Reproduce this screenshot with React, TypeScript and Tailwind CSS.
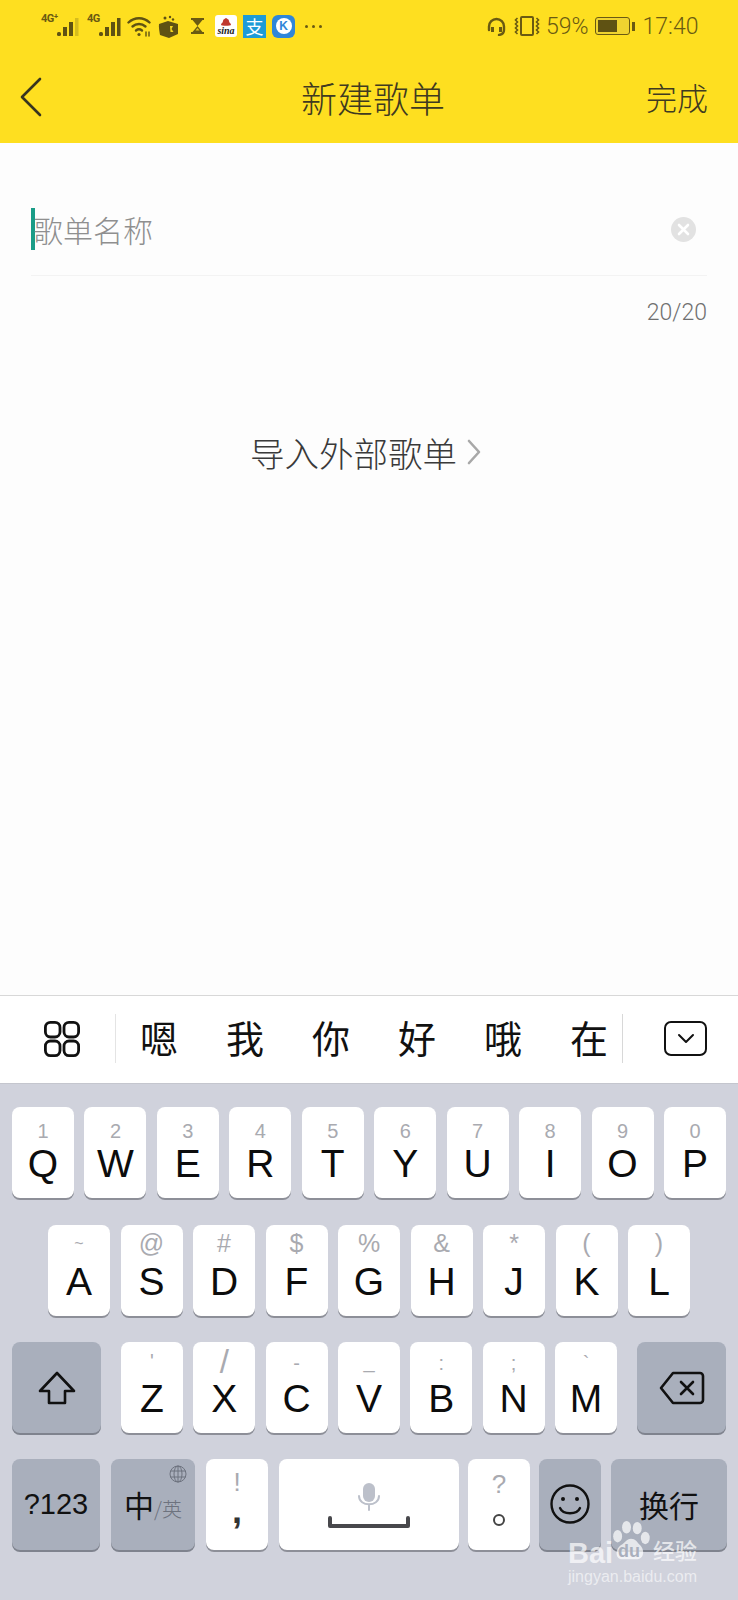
const CJK = "font-['Noto_Sans_CJK_SC','Noto_Sans',sans-serif]";

const ROW_ONE = [
  ['1', 'Q'], ['2', 'W'], ['3', 'E'], ['4', 'R'], ['5', 'T'],
  ['6', 'Y'], ['7', 'U'], ['8', 'I'], ['9', 'O'], ['0', 'P'],
];
const ROW_TWO = [
  ['~', 'A', '-mt-[5px] mb-[5px] text-[16px]'],
  ['@', 'S', '-mt-[5px] mb-[5px] text-[25px]'],
  ['#', 'D', '-mt-[5px] mb-[5px] text-[25px]'],
  ['$', 'F', '-mt-[5px] mb-[5px] text-[25px]'],
  ['%', 'G', '-mt-[5px] mb-[5px] text-[25px]'],
  ['&', 'H', '-mt-[5px] mb-[5px] text-[25px]'],
  ['*', 'J', '-mt-[5px] mb-[5px] text-[25px]'],
  ['(', 'K', '-mt-[5px] mb-[5px] text-[25px]'],
  [')', 'L', '-mt-[5px] mb-[5px] text-[25px]'],
];
const ROW_THREE = [
  ["'", 'Z', '-mt-[5px] mb-[5px] text-[20px]'],
  ['/', 'X', '-mt-[4px] mb-[4px] text-[33px]'],
  ['-', 'C', '-mt-[3px] mb-[3px] text-[20px]'],
  ['_', 'V', '-mt-[5px] mb-[5px] text-[20px]'],
  [':', 'B', '-mt-[3px] mb-[3px] text-[20px]'],
  [';', 'N', '-mt-[3px] mb-[3px] text-[20px]'],
  ['`', 'M', '-mt-[3px] mb-[3px] text-[20px]'],
];
const CANDIDATES = ['嗯', '我', '你', '好', '哦', '在'];

function SignalBars({ faded = false }: { faded?: boolean }) {
  return (
    <svg width="22" height="18" viewBox="0 0 22 18" fill="#5f5213">
      <rect x="0" y="14" width="4" height="4" rx="1.500" />
      <rect x="6" y="9" width="4" height="9" />
      <rect x="12" y="4" width="4" height="14" />
      <rect x="18" y="0" width="3.500" height="18" opacity={faded ? 0.25 : 1} />
    </svg>
  );
}

function WifiIcon() {
  return (
    <svg width="24" height="21" viewBox="0 0 24 21" fill="none" stroke="#5f5213" strokeWidth="2.400" strokeLinecap="round">
      <path d="M1.500 6.500C7.500 .8 16.500 .8 22.500 6.500" />
      <path d="M5.500 10.500C9.200 7.200 14.800 7.200 18.500 10.500" />
      <path d="M9 14.500c1.800-1.400 4.200-1.400 6 0" />
      <circle cx="12" cy="18.500" r="1.600" fill="#5f5213" stroke="none" />
      <path d="M19 16v4M22 16v4" strokeWidth="1.400" />
    </svg>
  );
}

function GiftIcon() {
  return (
    <svg width="21" height="23" viewBox="0 0 21 23" fill="#5f5213">
      <path d="M1 9l9-3 10 3v10l-9 4-9-3C1.500 17 .5 12 1 9z" />
      <path d="M12 11l3 0-1.500 3 2 3-3 0z" fill="#f5d820" />
      <circle cx="7" cy="3" r="1.500" />
      <circle cx="12" cy="2" r="1.200" />
      <circle cx="15" cy="4.500" r="1.200" />
    </svg>
  );
}

function HourglassIcon() {
  return (
    <svg width="13" height="16" viewBox="0 0 13 16" fill="#6a5a12">
      <rect x="0" y="0" width="13" height="2" />
      <rect x="0" y="14" width="13" height="2" />
      <path d="M1.500 2h10L6.500 8zM6.500 8l5 6h-10z" />
      <path d="M4.500 12.500L6.500 10l2 2.500z" fill="#e0c41e" />
    </svg>
  );
}

function HeadphoneIcon() {
  return (
    <svg width="19" height="19" viewBox="0 0 19 19" fill="none" stroke="#6a5a12" strokeWidth="2.400">
      <path d="M2 13V9.500a7.500 7.500 0 0 1 15 0V13c0 2.500-2 4.500-5 5" strokeLinecap="round" />
      <rect x="4" y="10" width="3" height="5" fill="#6a5a12" stroke="none" />
      <rect x="12" y="10" width="3" height="5" fill="#6a5a12" stroke="none" />
    </svg>
  );
}

function VibrateIcon() {
  return (
    <svg width="26" height="20" viewBox="0 0 26 20" fill="none" stroke="#6a5a12" strokeWidth="2">
      <rect x="7" y="1" width="12" height="18" rx="1" />
      <path d="M3.500 2l-2 2 2 2-2 2 2 2-2 2 2 2-2 2 2 2" strokeWidth="1.600" />
      <path d="M22.500 2l2 2-2 2 2 2-2 2 2 2-2 2 2 2-2 2" strokeWidth="1.600" />
    </svg>
  );
}

function StatusBar() {
  return (
    <div className="flex h-[52px] items-center pl-[41px] text-[#6a5a12]">
      <span className="mt-[-16px] w-[16px] font-['Roboto',sans-serif] text-[11px] font-bold leading-none tracking-[-0.5px]">4G⁺</span>
      <span className="mt-[2px]"><SignalBars faded /></span>
      <span className="ml-[8px] mt-[-16px] w-[12px] font-['Roboto',sans-serif] text-[11px] font-bold leading-none tracking-[-0.5px]">4G</span>
      <span className="mt-[2px]"><SignalBars /></span>
      <span className="ml-[6px]"><WifiIcon /></span>
      <span className="ml-[7px]"><GiftIcon /></span>
      <span className="ml-[12px]"><HourglassIcon /></span>
      <div className="ml-[11px] flex h-[22px] w-[22px] flex-col items-center justify-center rounded-[3px] bg-white text-[#b8252c]">
        <svg width="10" height="8" viewBox="0 0 10 8" fill="#c0392f">
          <path d="M5 0c1 1 3 1 3 3s2 2 2 4c0 1-10 1-10 0 0-2 2-2 2-4s2-2 3-3z" />
        </svg>
        <span className="font-['Liberation_Serif',serif] text-[10px] font-bold italic leading-[9px] text-[#222]">sina</span>
      </div>
      <div className={`ml-[6px] flex h-[23px] w-[23px] items-center justify-center bg-[#1e9bd6] text-[18px] leading-none text-white ${CJK}`}>
        支
      </div>
      <div className="ml-[6px] flex h-[23px] w-[23px] items-center justify-center rounded-[6px] bg-[#2f86d8]">
        <div className="flex h-[16px] w-[16px] items-center justify-center rounded-full bg-white font-['Liberation_Sans',sans-serif] text-[12px] font-bold leading-none text-[#2f86d8]">
          K
        </div>
      </div>
      <div className="ml-[10px] flex gap-[4px]">
        <span className="h-[3px] w-[3px] rounded-full bg-[#6a5a12]" />
        <span className="h-[3px] w-[3px] rounded-full bg-[#6a5a12]" />
        <span className="h-[3px] w-[3px] rounded-full bg-[#6a5a12]" />
      </div>

      <span className="ml-[165px]"><HeadphoneIcon /></span>
      <span className="ml-[8px]"><VibrateIcon /></span>
      <span className="ml-[6px] font-['Roboto',sans-serif] text-[23px] font-light leading-none">59%</span>
      <div className="ml-[6px] flex items-center">
        <div className="flex h-[18px] w-[35px] rounded-[3px] border border-[#6a5a12] bg-[#f0d430] p-[2px]">
          <div className="w-[19px] bg-[#5f5213]" />
        </div>
        <div className="ml-[2px] h-[9px] w-[3px] bg-[#6a5a12]" />
      </div>
      <span className="ml-[8px] font-['Roboto',sans-serif] text-[23px] font-light leading-none">17:40</span>
    </div>
  );
}

function NavBar() {
  return (
    <div className={`flex h-[91px] items-center pb-[2px] pl-[20px] pr-[30px] text-[#3f3a20] ${CJK}`}>
      <svg width="22" height="40" viewBox="0 0 22 40" fill="none" stroke="#37341f" strokeWidth="2.600" strokeLinecap="round" strokeLinejoin="round">
        <path d="M20 2L2 20l18 18" />
      </svg>
      <h1 className="ml-[259px] text-[36px] font-light leading-none">新建歌单</h1>
      <span className="ml-auto text-[31px] font-light leading-none">完成</span>
    </div>
  );
}

function NameField() {
  return (
    <div className="px-[31px] pt-[65px]">
      <div className="flex h-[68px] items-start border-b border-[#f3f3f3]">
        <div className="h-[42px] w-[4px] bg-[#1a9c87]" />
        <span className={`ml-[-2px] mt-[5px] text-[30px] font-light leading-[32px] text-[#8f8f8f] ${CJK}`}>歌单名称</span>
        <div className="ml-auto mr-[11px] mt-[9px] flex h-[25px] w-[25px] items-center justify-center rounded-full bg-[#e2e2e2]">
          <svg width="13" height="13" viewBox="0 0 13 13" stroke="#fff" strokeWidth="2.600" strokeLinecap="round">
            <path d="M2 2l9 9M11 2l-9 9" />
          </svg>
        </div>
      </div>
      <p className="mt-[25px] text-right font-['Roboto',sans-serif] text-[23px] font-light leading-none text-[#707070]">20/20</p>
    </div>
  );
}

function ImportLink() {
  return (
    <div className={`mt-[111px] flex items-center pl-[250px] ${CJK}`}>
      <span className="text-[34.500px] font-light leading-none text-[#3a3a3a]">导入外部歌单</span>
      <svg className="ml-[10px]" width="14" height="26" viewBox="0 0 14 26" fill="none" stroke="#a8a8a8" strokeWidth="2.600" strokeLinecap="round" strokeLinejoin="round">
        <path d="M2 2l10 11L2 24" />
      </svg>
    </div>
  );
}

function CandidateBar() {
  return (
    <div className="flex h-[88px] items-center border-t border-[#d8d8d8] bg-white pb-[2px]">
      <svg className="ml-[44px]" width="36" height="36" viewBox="0 0 36 36" fill="none" stroke="#111" strokeWidth="2.800">
        <rect x="1.400" y="1.400" width="14.600" height="14.600" rx="5" />
        <rect x="20" y="1.400" width="14.600" height="14.600" rx="5" />
        <rect x="1.400" y="20" width="14.600" height="14.600" rx="5" />
        <rect x="20" y="20" width="14.600" height="14.600" rx="5" />
      </svg>
      <div className="ml-[35px] h-[49px] w-px bg-[#e4e4e4]" />
      <div className={`flex w-[506px] pb-[4px] text-[38px] font-normal leading-none text-[#111] ${CJK}`}>
        {CANDIDATES.map((c) => (
          <span key={c} className="flex w-[86px] shrink-0 justify-center">{c}</span>
        ))}
      </div>
      <div className="h-[49px] w-px bg-[#d8d8d8]" />
      <div className="ml-[41px] flex h-[35px] w-[43px] items-center justify-center rounded-[7px] border-[2.500px] border-[#111]">
        <svg width="18" height="11" viewBox="0 0 18 11" fill="none" stroke="#111" strokeWidth="2" strokeLinecap="round" strokeLinejoin="round">
          <path d="M2 2l7 7 7-7" />
        </svg>
      </div>
    </div>
  );
}

function LetterKey({ hint, letter, hintClass = 'text-[20px]' }: { hint: string; letter: string; hintClass?: string }) {
  return (
    <div className="flex h-[91px] w-[62px] flex-col items-center rounded-[8px] bg-white pt-[12px] shadow-[0_2px_0_#8d8f98]">
      <span className={`flex h-[23px] items-center font-['Liberation_Sans',sans-serif] leading-none text-[#a9aab0] ${hintClass}`}>
        {hint}
      </span>
      <span className="mt-[3px] font-['Liberation_Sans',sans-serif] text-[39px] leading-[38px] text-[#0c0c0c]">{letter}</span>
    </div>
  );
}

function GrayKey({ className, children }: { className: string; children: React.ReactNode }) {
  return (
    <div className={`relative flex h-[91px] items-center justify-center rounded-[8px] bg-[#a9afbc] shadow-[0_2px_0_#7f838e] ${className}`}>
      {children}
    </div>
  );
}

function Keyboard() {
  return (
    <div className="flex flex-1 flex-col border-t border-[#c4c6ce] bg-[#d0d2dc] pt-[23px]">
      <div className="flex justify-between px-[12px]">
        {ROW_ONE.map(([h, l]) => <LetterKey key={l} hint={h} letter={l} />)}
      </div>
      <div className="mt-[27px] flex justify-between pl-[48px] pr-[48px]">
        {ROW_TWO.map(([h, l, c]) => <LetterKey key={l} hint={h} letter={l} hintClass={c} />)}
      </div>
      <div className="mt-[26px] flex items-start px-[12px]">
        <GrayKey className="w-[89px]">
          <svg width="38" height="34" viewBox="0 0 38 34" fill="none" stroke="#111" strokeWidth="2.600" strokeLinejoin="round">
            <path d="M19 2L2 20h9v12h16V20h9z" />
          </svg>
        </GrayKey>
        <div className="ml-[20px] flex w-[496px] justify-between">
          {ROW_THREE.map(([h, l, c]) => <LetterKey key={l} hint={h} letter={l} hintClass={c} />)}
        </div>
        <GrayKey className="ml-[20px] w-[89px]">
          <svg width="46" height="34" viewBox="0 0 46 34" fill="none" stroke="#111" strokeWidth="2.600" strokeLinejoin="round" strokeLinecap="round">
            <path d="M14 2h27a3 3 0 0 1 3 3v24a3 3 0 0 1-3 3H14L2 17z" />
            <path d="M22 11l12 12M34 11L22 23" />
          </svg>
        </GrayKey>
      </div>
      <div className="mt-[26px] flex items-start pl-[12px]">
        <GrayKey className="w-[88px] font-['Liberation_Sans',sans-serif] text-[29px] text-[#111]">?123</GrayKey>
        <GrayKey className={`ml-[11px] w-[84px] ${CJK}`}>
          <svg className="absolute right-[8px] top-[6px]" width="18" height="18" viewBox="0 0 18 18" fill="none" stroke="#6d727e" strokeWidth="1">
            <circle cx="9" cy="9" r="8" />
            <ellipse cx="9" cy="9" rx="4" ry="8" />
            <path d="M9 1v16M1.500 6h15M1.500 12h15" />
          </svg>
          <span className="mt-[-2px] text-[30px] leading-none text-[#111]">中</span>
          <span className="mt-[8px] text-[20px] font-light leading-none text-[#6d727e]">/英</span>
        </GrayKey>
        <div className="ml-[11px] flex h-[91px] w-[62px] flex-col items-center rounded-[8px] bg-white pt-[9px] shadow-[0_2px_0_#8d8f98]">
          <span className="font-['Liberation_Sans',sans-serif] text-[26px] leading-[28px] text-[#a9aab0]">!</span>
          <span className="mt-[-3px] font-['Liberation_Sans',sans-serif] text-[36px] font-bold leading-[36px] text-[#333]">,</span>
        </div>
        <div className="ml-[11px] flex h-[91px] w-[180px] flex-col items-center rounded-[8px] bg-white pt-[24px] shadow-[0_2px_0_#8d8f98]">
          <svg width="24" height="28" viewBox="0 0 24 28" fill="none">
            <rect x="6" y="0" width="12" height="19" rx="6" fill="#bcc0ca" />
            <path d="M2 13c0 11 20 11 20 0M12 22v5" stroke="#bcc0ca" strokeWidth="2" strokeLinecap="round" />
          </svg>
          <svg className="mt-[5px]" width="82" height="13" viewBox="0 0 82 13" fill="none" stroke="#48484c" strokeWidth="4" strokeLinecap="round" strokeLinejoin="round">
            <path d="M2 2v8h78V2" />
          </svg>
        </div>
        <div className="ml-[9px] flex h-[91px] w-[62px] flex-col items-center rounded-[8px] bg-white pt-[10px] shadow-[0_2px_0_#8d8f98]">
          <span className="font-['Liberation_Sans',sans-serif] text-[26px] leading-[30px] text-[#a9aab0]">?</span>
          <span className="mt-[15px] h-[12px] w-[12px] rounded-full border-[2.500px] border-[#444]" />
        </div>
        <GrayKey className="ml-[9px] w-[62px]">
          <svg className="mt-[-1px]" width="40" height="40" viewBox="0 0 40 40" fill="none" stroke="#111" strokeWidth="2.400" strokeLinecap="round">
            <circle cx="20" cy="20" r="18.500" />
            <circle cx="13" cy="15" r="2" fill="#111" stroke="none" />
            <circle cx="27" cy="15" r="2" fill="#111" stroke="none" />
            <path d="M10 24c3 7 17 7 20 0" />
          </svg>
        </GrayKey>
        <GrayKey className={`ml-[10px] w-[116px] text-[30px] font-normal text-[#111] ${CJK}`}>换行</GrayKey>
      </div>
    </div>
  );
}

function Watermark() {
  return (
    <div className="pointer-events-none absolute left-[566px] top-[1520px] h-[70px] w-[135px] text-white/70">
      <div className="absolute left-[2px] top-[19px] font-['Liberation_Sans',sans-serif] text-[29px] font-bold leading-none">Bai</div>
      <svg className="absolute left-[46px] top-[1px]" width="38" height="41" viewBox="0 0 42 46" fill="currentColor">
        <ellipse cx="6" cy="17" rx="5" ry="7" />
        <ellipse cx="16" cy="7" rx="5" ry="7" />
        <ellipse cx="28" cy="8" rx="5" ry="7" />
        <ellipse cx="37" cy="19" rx="5" ry="7" />
        <path d="M21 20c5 0 7 4 10 7 5 4 6 16-4 16H11C3 43 3 31 10 27c4-2 6-7 11-7z" />
      </svg>
      <div className="absolute left-[52px] top-[22px] font-['Liberation_Sans',sans-serif] text-[18px] font-bold leading-none text-[#a9afbc]">du</div>
      <div className={`absolute left-[87px] top-[18px] text-[22px] font-medium leading-none ${CJK}`}>经验</div>
      <div className="absolute left-[2px] top-[49px] font-['Liberation_Sans',sans-serif] text-[16px] leading-none text-white/60">jingyan.baidu.com</div>
    </div>
  );
}

export default function App() {
  return (
    <div className="relative flex h-[1600px] w-[738px] flex-col overflow-hidden bg-[#fdfdfd]">
      <header className="h-[143px] bg-[#fedf20]">
        <StatusBar />
        <NavBar />
      </header>
      <main className="h-[852px]">
        <NameField />
        <ImportLink />
      </main>
      <CandidateBar />
      <Keyboard />
      <Watermark />
    </div>
  );
}
